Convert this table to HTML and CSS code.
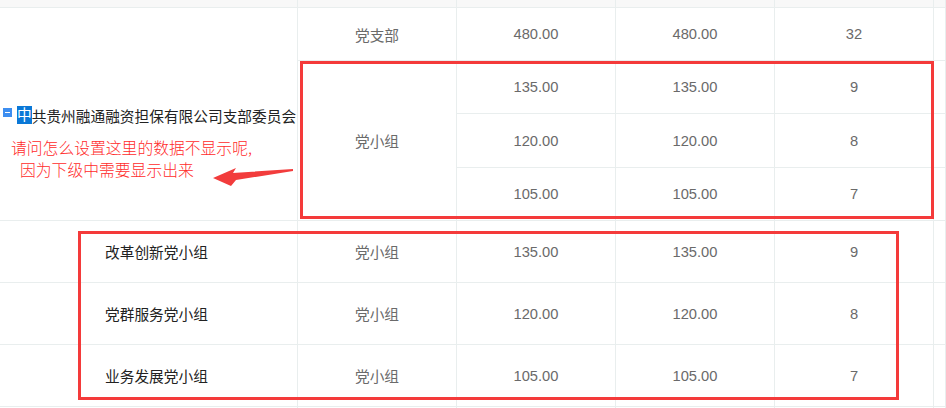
FILE: index.html
```html
<!DOCTYPE html>
<html lang="zh-CN">
<head>
  <meta charset="UTF-8" />
  <meta name="viewport" content="width=device-width, initial-scale=1.0" />
  <title>党组织统计</title>
  <link rel="stylesheet" href="styles.css">
</head>
<body>
  <div class="page">
    <div class="grid">
      <div class="cell strip"></div>
      <div class="cell strip"></div>
      <div class="cell strip"></div>
      <div class="cell strip"></div>
      <div class="cell strip"></div>
      <div class="cell strip"></div>

      <div class="cell tree">
        <span class="fold"></span><span class="sel">中</span>共贵州融通融资担保有限公司支部委员会
      </div>
      <div class="cell">党支部</div>
      <div class="cell">480.00</div>
      <div class="cell">480.00</div>
      <div class="cell">32</div>
      <div class="cell"></div>

      <div class="cell group">党小组</div>
      <div class="cell">135.00</div>
      <div class="cell">135.00</div>
      <div class="cell">9</div>
      <div class="cell"></div>

      <div class="cell">120.00</div>
      <div class="cell">120.00</div>
      <div class="cell">8</div>
      <div class="cell"></div>

      <div class="cell">105.00</div>
      <div class="cell">105.00</div>
      <div class="cell">7</div>
      <div class="cell"></div>

      <div class="cell name">改革创新党小组</div>
      <div class="cell">党小组</div>
      <div class="cell">135.00</div>
      <div class="cell">135.00</div>
      <div class="cell">9</div>
      <div class="cell"></div>

      <div class="cell name">党群服务党小组</div>
      <div class="cell">党小组</div>
      <div class="cell">120.00</div>
      <div class="cell">120.00</div>
      <div class="cell">8</div>
      <div class="cell"></div>

      <div class="cell name">业务发展党小组</div>
      <div class="cell">党小组</div>
      <div class="cell">105.00</div>
      <div class="cell">105.00</div>
      <div class="cell">7</div>
      <div class="cell"></div>

      <div class="cell"></div>
      <div class="cell"></div>
      <div class="cell"></div>
      <div class="cell"></div>
      <div class="cell"></div>
      <div class="cell"></div>
    </div>

    <!-- annotations drawn over the table -->
    <div class="mark mark-top"></div>
    <div class="mark mark-bottom"></div>
    <p class="note">请问怎么设置这里的数据不显示呢,<br><span class="note-2">因为下级中需要显示出来</span></p>
    <svg class="arrow" width="90" height="22" viewBox="0 0 90 22">
      <polygon points="0,10 23,0 20,5 80,1 80,3 23,12 18,18" fill="#f23c3c" />
    </svg>
  </div>
</body>
</html>
```

FILE: styles.css
```css
body {
  margin: 0;
  background: #fff;
  font-family: "Liberation Sans", "Noto Sans CJK SC", sans-serif;
  overflow: hidden;
}
.page {
  position: relative;
  width: 946px;
  height: 408px;
  overflow: hidden;
}
.grid {
  display: grid;
  grid-template-columns: 298px 159px 159px 159px 159px 1fr;
  grid-template-rows: 8px 53px 53px 54px 53px 62px 62px 62px 62px;
}
.cell {
  box-sizing: border-box;
  border-right: 1px solid #e9eeee;
  border-bottom: 1px solid #e9eeee;
  display: flex;
  align-items: center;
  justify-content: center;
  font-size: 14.7px;
  color: #6a6a6a;
}
.strip {
  background: #f8f8f8;
}
.tree {
  grid-row: span 4;
  justify-content: flex-start;
  padding-left: 3px;
  color: #222;
  padding-top: 2px;
}
.group {
  grid-row: span 3;
}
.name {
  justify-content: flex-start;
  padding-left: 105px;
  color: #222;
}
.fold {
  position: relative;
  width: 9px;
  height: 9px;
  background: #3d8ef0;
  margin-right: 5px;
  margin-top: -6px;
}
.fold::after {
  content: "";
  position: absolute;
  left: 2px;
  top: 4px;
  width: 5px;
  height: 1px;
  background: #fff;
}
.sel {
  background: #0a78d7;
  color: #fff;
  line-height: 18px;
}
.mark {
  position: absolute;
  border: 3px solid #f43a3a;
}
.mark-top {
  left: 300px;
  top: 61px;
  width: 628px;
  height: 152px;
}
.mark-bottom {
  left: 78px;
  top: 231px;
  width: 815px;
  height: 163px;
}
.note {
  position: absolute;
  left: 11px;
  top: 137px;
  margin: 0;
  font-family: "Noto Sans CJK SC", sans-serif;
  font-weight: 300;
  font-size: 15.8px;
  line-height: 22px;
  color: #ff2b2b;
}
.note-2 {
  padding-left: 9px;
}
.arrow {
  position: absolute;
  left: 213px;
  top: 168px;
}
```
